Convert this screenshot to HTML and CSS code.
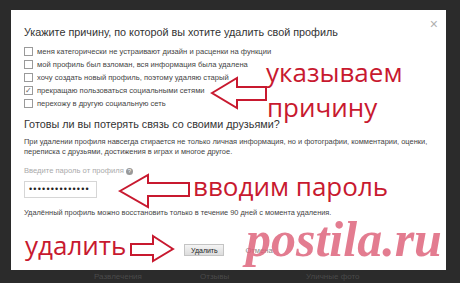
FILE: index.html
```html
<!DOCTYPE html>
<html lang="ru">
<head>
    <meta charset="UTF-8">
    <title>Удаление профиля</title>
    <link rel="stylesheet" href="styles.css">
</head>
<body>
    <div class="backdrop">
        <span class="under-a">Развлечения</span>
        <span class="under-b">Отзывы</span>
        <span class="under-c">Уличные фото</span>
    </div>

    <div class="dialog">
        <span class="close">&#215;</span>
        <h1>Укажите причину, по которой вы хотите удалить свой профиль</h1>
        <ul class="reasons">
            <li><span class="box"></span>меня категорически не устраивают дизайн и расценки на функции</li>
            <li><span class="box"></span>мой профиль был взломан, вся информация была удалена</li>
            <li><span class="box"></span>хочу создать новый профиль, поэтому удаляю старый</li>
            <li><span class="box checked">&#10003;</span>прекращаю пользоваться социальными сетями</li>
            <li><span class="box"></span>перехожу в другую социальную сеть</li>
        </ul>
        <h2>Готовы ли вы потерять связь со своими друзьями?</h2>
        <p class="warn">При удалении профиля навсегда стирается не только личная информация, но и фотографии, комментарии, оценки,<br>переписка с друзьями, достижения в играх и многое другое.</p>
        <div class="label">Введите пароль от профиля <span class="help">?</span></div>
        <div class="pass">&#8226;&#8226;&#8226;&#8226;&#8226;&#8226;&#8226;&#8226;&#8226;&#8226;&#8226;&#8226;&#8226;&#8226;</div>
        <p class="note">Удалённый профиль можно восстановить только в течение 90 дней с момента удаления.</p>
        <div class="footer">
            <button class="btn">Удалить</button>
            <span class="cancel">Отмена</span>
        </div>
    </div>

    <!-- red notes drawn over the screenshot -->
    <div class="note-red n1">указываем</div>
    <div class="note-red n2">причину</div>
    <div class="note-red n3">вводим пароль</div>
    <div class="note-red n4">удалить</div>
    <svg class="arrows" width="460" height="283" viewBox="0 0 460 283">
        <g fill="#fff" stroke="#c8192f" stroke-width="2" stroke-linejoin="miter">
            <path d="M212 93 L237 78 L237 87 L266 87 L266 100 L237 100 L237 108 Z"/>
            <path d="M120 191 L148 175 L148 183 L189 183 L189 196 L148 196 L148 207 Z"/>
            <path d="M173 249 L153 236 L153 244 L131 244 L131 255 L153 255 L153 261 Z"/>
        </g>
    </svg>
    <div class="mark">postila.ru</div>
</body>
</html>
```
FILE: styles.css
```css
body {
    margin: 0;
    width: 460px;
    height: 283px;
    overflow: hidden;
    position: relative;
    background: #2b2b2b;
    font-family: "Liberation Sans", Arial, sans-serif;
    color: #333;
}
.backdrop {
    position: absolute;
    inset: 0;
    font-size: 8px;
    color: #4a4a4a;
}
.under-a { position: absolute; left: 94px; top: 272px; }
.under-b { position: absolute; left: 200px; top: 272px; }
.under-c { position: absolute; left: 306px; top: 272px; }

.dialog {
    position: relative;
    margin: 10px 0 0 11px;
    width: 435px;
    height: 260px;
    box-sizing: border-box;
    padding: 14px 13px 0;
    background: #fff;
}
.close {
    position: absolute;
    right: 8px;
    top: 6px;
    font-size: 14px;
    color: #b0b0b0;
}
h1, h2 {
    margin: 0;
    font-weight: normal;
    font-size: 10.8px;
    line-height: 16px;
    color: #333;
}
.reasons {
    list-style: none;
    margin: 5px 0 0;
    padding: 0;
    font-size: 7.6px;
    color: #444;
}
.reasons li {
    display: flex;
    align-items: center;
    gap: 4px;
    height: 13px;
}
.box {
    width: 7px;
    height: 7px;
    border: 1px solid #9a9a9a;
    font-size: 8px;
    line-height: 7px;
    text-align: center;
    color: #666;
}
h2 { margin-top: 6px; }
.warn {
    margin: 5px 0 0;
    font-size: 7.45px;
    line-height: 10px;
    white-space: nowrap;
    color: #444;
}
.label {
    margin-top: 9px;
    font-size: 7.6px;
    line-height: 10px;
    color: #aaa;
}
.help {
    display: inline-block;
    width: 7px;
    height: 7px;
    border-radius: 50%;
    background: #999;
    color: #fff;
    font-size: 6px;
    line-height: 7px;
    text-align: center;
}
.pass {
    margin-top: 5px;
    width: 73px;
    height: 17px;
    box-sizing: border-box;
    border: 1px solid #d6d6d6;
    font-size: 9px;
    line-height: 15px;
    padding-left: 4px;
    color: #222;
    letter-spacing: 1.2px;
}
.note {
    margin: 10px 0 0;
    font-size: 7.4px;
    line-height: 10px;
    color: #444;
}
.footer {
    display: flex;
    justify-content: center;
    align-items: center;
    gap: 21px;
    margin-top: 26px;
}
.btn {
    width: 40px;
    height: 12px;
    padding: 0;
    border: 1px solid #c4c4c4;
    background: linear-gradient(#f4f4f4, #dcdcdc);
    font-family: "Liberation Sans", Arial, sans-serif;
    font-size: 7px;
    color: #222;
}
.cancel {
    font-size: 7.6px;
    color: #888;
}

.note-red {
    position: absolute;
    font-family: "Open Sans", sans-serif;
    font-size: 26px;
    line-height: 1;
    color: #c8192f;
}
.n1 { left: 266px; top: 59px; }
.n2 { left: 267px; top: 94px; }
.n3 { left: 193px; top: 173px; }
.n4 { left: 25px; top: 232px; }
.arrows {
    position: absolute;
    left: 0;
    top: 0;
}
.mark {
    position: absolute;
    left: 246px;
    top: 214px;
    font-family: "Liberation Serif", serif;
    font-weight: bold;
    font-style: italic;
    font-size: 50px;
    line-height: 1;
    color: rgba(221, 95, 120, 0.82);
}
```
